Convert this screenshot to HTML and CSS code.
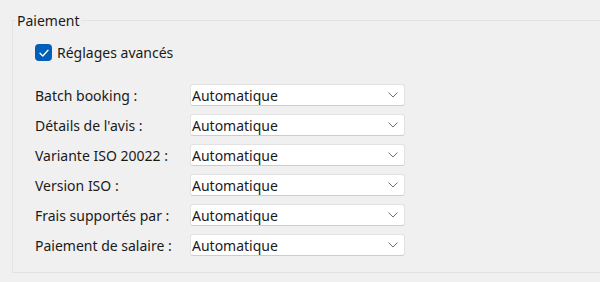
FILE: index.html
```html
<!DOCTYPE html>
<html lang="fr">
<head>
  <meta charset="UTF-8" />
  <title>Paiement</title>
  <link rel="stylesheet" href="styles.css">
</head>
<body>
  <fieldset class="group">
    <legend>Paiement</legend>
    <label class="check">
      <span class="box">
        <svg width="10" height="8" viewBox="0 0 10 8"><path d="M1 4.2 L3.8 7 L9 1.2" fill="none" stroke="#fff" stroke-width="1.3" stroke-linecap="round" stroke-linejoin="round"/></svg>
      </span>
      Réglages avancés
    </label>
    <div class="rows">
      <span class="lbl">Batch booking :</span>
      <div class="select"><span>Automatique</span><svg width="10" height="6" viewBox="0 0 10 6"><path d="M0.5 0.5 L5 5 L9.5 0.5" fill="none" stroke="#707070" stroke-width="1"/></svg></div>
      <span class="lbl">Détails de l'avis :</span>
      <div class="select"><span>Automatique</span><svg width="10" height="6" viewBox="0 0 10 6"><path d="M0.5 0.5 L5 5 L9.5 0.5" fill="none" stroke="#707070" stroke-width="1"/></svg></div>
      <span class="lbl">Variante ISO 20022 :</span>
      <div class="select"><span>Automatique</span><svg width="10" height="6" viewBox="0 0 10 6"><path d="M0.5 0.5 L5 5 L9.5 0.5" fill="none" stroke="#707070" stroke-width="1"/></svg></div>
      <span class="lbl">Version ISO :</span>
      <div class="select"><span>Automatique</span><svg width="10" height="6" viewBox="0 0 10 6"><path d="M0.5 0.5 L5 5 L9.5 0.5" fill="none" stroke="#707070" stroke-width="1"/></svg></div>
      <span class="lbl">Frais supportés par :</span>
      <div class="select"><span>Automatique</span><svg width="10" height="6" viewBox="0 0 10 6"><path d="M0.5 0.5 L5 5 L9.5 0.5" fill="none" stroke="#707070" stroke-width="1"/></svg></div>
      <span class="lbl">Paiement de salaire :</span>
      <div class="select"><span>Automatique</span><svg width="10" height="6" viewBox="0 0 10 6"><path d="M0.5 0.5 L5 5 L9.5 0.5" fill="none" stroke="#707070" stroke-width="1"/></svg></div>
    </div>
  </fieldset>
</body>
</html>
```

FILE: styles.css
```css
body {
  margin: 0;
  padding: 11px 0 0 12px;
  background: #f0f0f0;
  font-family: "Noto Sans", "Open Sans", sans-serif;
  font-size: 14px;
  color: #1a1a1a;
  overflow: hidden;
}
.group {
  margin: 0;
  width: 588px;
  height: 262px;
  box-sizing: border-box;
  border: 1px solid #e3e3e3;
  border-right: none;
  padding: 12px 0 0 22px;
}
.group legend {
  padding: 0 1px;
  margin-left: -19px;
}
.check {
  display: flex;
  align-items: center;
  gap: 5px;
  padding-top: 1px;
}
.box {
  width: 17px;
  height: 17px;
  border-radius: 4px;
  background: #005fb8;
  display: flex;
  align-items: center;
  justify-content: center;
}
.rows {
  margin-top: 22px;
  display: grid;
  grid-template-columns: 155px 215px;
  row-gap: 8px;
  align-items: center;
}
.select {
  height: 22px;
  box-sizing: border-box;
  background: #fff;
  border: 1px solid #e2e2e2;
  border-bottom-color: #cdcdcd;
  border-radius: 3px;
  display: flex;
  align-items: center;
  justify-content: space-between;
  padding: 0 6px 0 1px;
}
```
